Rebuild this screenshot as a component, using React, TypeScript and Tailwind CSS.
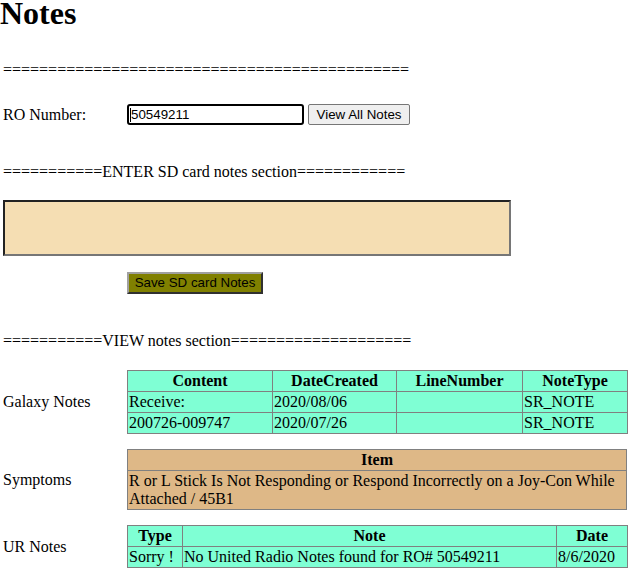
import React from 'react';

interface GalaxyNote {
  content: string;
  dateCreated: string;
  lineNumber: string;
  noteType: string;
}

const galaxyNotes: GalaxyNote[] = [
  { content: 'Receive:', dateCreated: '2020/08/06', lineNumber: '', noteType: 'SR_NOTE' },
  { content: '200726-009747', dateCreated: '2020/07/26', lineNumber: '', noteType: 'SR_NOTE' },
];

const roNumber = '50549211';

const cell = 'border border-[#808080] px-px py-px text-left font-normal align-top';
const head = 'border border-[#808080] px-px py-px text-center font-bold';

const Label = ({ children }: { children: React.ReactNode }) => (
  <div className="w-[127px] shrink-0 pl-[3px] leading-[18px]">{children}</div>
);

const App = () => {
  return (
    <div className="min-h-[571px] bg-white text-black font-['Liberation_Serif','Times_New_Roman',serif] text-[16px]">
      <h1 className="text-[32px] font-bold leading-[26px]">Notes</h1>

      {/* RO lookup */}
      <div className="mt-[35px] pl-[3px] leading-[18px]">
        {'='.repeat(45)}
      </div>
      <div className="mt-[25px] flex items-center h-[21px]">
        <Label>RO Number:</Label>
        <div className="flex items-center gap-[4px]">
          <div className="relative">
            <input
              type="text"
              defaultValue={roNumber}
              className="block w-[177px] h-[21px] border-2 border-black rounded-[3px] pl-[2px] text-[13.333px] font-['Liberation_Sans',Arial,sans-serif] outline-none bg-white"
            />
            <span className="absolute left-[3px] top-[4px] h-[14px] w-px bg-black" />
          </div>
          <button className="block h-[21px] w-[102px] border border-[#767676] rounded-[2px] bg-[#efefef] text-[13.333px] font-['Liberation_Sans',Arial,sans-serif] leading-none">
            View All Notes
          </button>
        </div>
      </div>

      {/* Enter section */}
      <div className="mt-[38px] pl-[3px] leading-[18px]">
        {'='.repeat(11)}ENTER SD card notes section{'='.repeat(12)}
      </div>
      <div className="mt-[19px] pl-[3px]">
        <textarea
          className="block w-[508px] h-[56px] resize-none border-2 border-t-[#222222] border-l-[#222222] border-b-[#767676] border-r-[#767676] bg-[#f5deb3] outline-none"
          defaultValue=""
        />
      </div>
      <div className="mt-[16px] pl-[127px] flex">
        <button className="block h-[22px] w-[136px] border-2 border-t-[#a0a0a0] border-l-[#a0a0a0] border-b-[#303030] border-r-[#303030] bg-[#808000] text-[13.333px] font-['Liberation_Sans',Arial,sans-serif] leading-none text-black">
          Save SD card Notes
        </button>
      </div>

      {/* View section */}
      <div className="mt-[38px] pl-[3px] leading-[18px]">
        {'='.repeat(11)}VIEW notes section{'='.repeat(20)}
      </div>

      <div className="mt-[20px] flex items-center">
        <Label>Galaxy Notes</Label>
        <table className="w-[500px] table-fixed border-collapse border border-[#808080] bg-[#7fffd4] leading-[18px]">
          <colgroup>
            <col className="w-[145px]" />
            <col className="w-[124px]" />
            <col className="w-[126px]" />
            <col className="w-[105px]" />
          </colgroup>
          <thead>
            <tr>
              <th className={head}>Content</th>
              <th className={head}>DateCreated</th>
              <th className={head}>LineNumber</th>
              <th className={head}>NoteType</th>
            </tr>
          </thead>
          <tbody>
            {galaxyNotes.map((note, i) => (
              <tr key={i}>
                <td className={cell}>{note.content}</td>
                <td className={cell}>{note.dateCreated}</td>
                <td className={cell}>{note.lineNumber}</td>
                <td className={cell}>{note.noteType}</td>
              </tr>
            ))}
          </tbody>
        </table>
      </div>

      <div className="mt-[15px] flex items-center">
        <Label>Symptoms</Label>
        <table className="w-[500px] table-fixed border-collapse border border-[#808080] bg-[#deb887] leading-[18px]">
          <thead>
            <tr>
              <th className={head}>Item</th>
            </tr>
          </thead>
          <tbody>
            <tr>
              <td className={cell}>
                R or L Stick Is Not Responding or Respond Incorrectly on a Joy-Con While Attached / 45B1
              </td>
            </tr>
          </tbody>
        </table>
      </div>

      <div className="mt-[15px] flex items-center">
        <Label>UR Notes</Label>
        <table className="w-[500px] table-fixed border-collapse border border-[#808080] bg-[#7fffd4] leading-[18px]">
          <colgroup>
            <col className="w-[55px]" />
            <col className="w-[374px]" />
            <col className="w-[71px]" />
          </colgroup>
          <thead>
            <tr>
              <th className={head}>Type</th>
              <th className={head}>Note</th>
              <th className={head}>Date</th>
            </tr>
          </thead>
          <tbody>
            <tr>
              <td className={cell}>Sorry !</td>
              <td className={cell}>No United Radio Notes found for RO# {roNumber}</td>
              <td className={cell}>8/6/2020</td>
            </tr>
          </tbody>
        </table>
      </div>
    </div>
  );
};

export default App;
